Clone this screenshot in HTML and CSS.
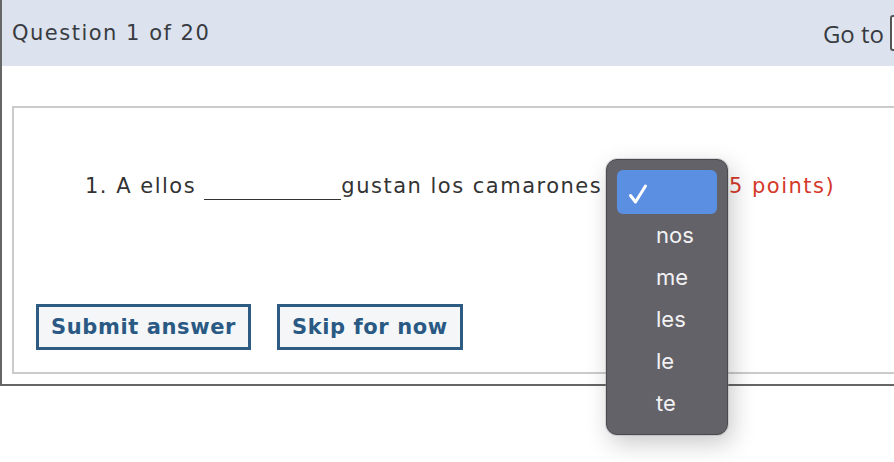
FILE: index.html
```html
<!DOCTYPE html>
<html lang="es">
<head>
<meta charset="utf-8">
<title>Question 1 of 20</title>
<link rel="stylesheet" href="styles.css">
</head>
<body>
<div class="frame">
  <header class="topbar">
    <span class="qcount">Question 1 of 20</span>
    <span class="goto">Go to <span class="goto-input"></span></span>
  </header>
  <div class="content">
    <div class="qbox">
      <p class="question">1. A ellos <span class="blank"></span>gustan los camarones<span class="select-slot"></span><span class="points">(0.5 points)</span></p>
      <div class="actions">
        <button class="btn">Submit answer</button>
        <button class="btn">Skip for now</button>
      </div>
    </div>
  </div>
  <div class="menu">
    <div class="item selected"><svg class="check" width="20" height="22" viewBox="0 0 20 22"><polyline points="2.5,12.5 7.5,19 17.5,3" fill="none" stroke="#fff" stroke-width="3" stroke-linecap="round" stroke-linejoin="round"/></svg></div>
    <div class="item">nos</div>
    <div class="item">me</div>
    <div class="item">les</div>
    <div class="item">le</div>
    <div class="item">te</div>
  </div>
</div>
</body>
</html>
```
FILE: styles.css
```css
html, body {
  margin: 0;
  padding: 0;
  background: #fff;
  overflow: hidden;
}
body {
  width: 894px;
  height: 462px;
}
.frame {
  position: relative;
  width: 960px;
  border-left: 2px solid #666;
  border-bottom: 2px solid #666;
  font-family: "DejaVu Sans", Verdana, sans-serif;
}
.topbar {
  height: 66px;
  background: #dce3ee;
  display: flex;
  align-items: center;
  justify-content: space-between;
  padding: 0 30px 0 10px;
  color: #383b41;
  font-size: 21px;
  letter-spacing: 1.5px;
}
.goto {
  display: flex;
  align-items: center;
  font-family: "Open Sans", "Noto Sans", sans-serif;
  font-size: 24px;
  letter-spacing: 0;
  color: #383b41;
}
.goto-input {
  display: inline-block;
  width: 38px;
  height: 32px;
  margin-left: 6px;
  border: 2px solid #555;
  border-radius: 3px;
  background: #fff;
}
.content {
  padding: 40px 0 10px 10px;
}
.qbox {
  border: 2px solid #cbcbcb;
  border-right: none;
  padding: 66px 0 22px 22px;
}
.question {
  margin: 0 0 0 49px;
  font-size: 21px;
  letter-spacing: 1.5px;
  line-height: 24px;
  color: #333;
  display: flex;
  align-items: baseline;
  white-space: pre;
}
.blank {
  display: inline-block;
  width: 137px;
  border-bottom: 1.5px solid #333;
  height: 1px;
  align-self: flex-end;
  margin-bottom: -2px;
}
.select-slot {
  display: inline-block;
  width: 94px;
}
.points {
  color: #d4392a;
}
.actions {
  margin-top: 106px;
  display: flex;
  gap: 26px;
}
.btn {
  font-family: "DejaVu Sans", Verdana, sans-serif;
  font-weight: bold;
  font-size: 21px;
  letter-spacing: 0.6px;
  color: #2a5a84;
  background: #f4f6f8;
  border: 3px solid #2d5b82;
  height: 46px;
  padding: 0 12px;
  margin: 0;
}
.menu {
  position: absolute;
  left: 604px;
  top: 159px;
  width: 100px;
  padding: 10px 10px;
  background: #646269;
  border: 1px solid #4a494e;
  border-radius: 11px;
  box-shadow: 0 0 0 1px rgba(160,160,165,0.35), 4px 8px 24px rgba(0,0,0,0.22);
  font-family: "Inter", "Liberation Sans", sans-serif;
  font-size: 22px;
  color: #f2f2f4;
}
.item {
  height: 42px;
  display: flex;
  align-items: center;
  padding-left: 39px;
}
.item.selected {
  height: 44px;
  background: #5b8fe2;
  border-radius: 6px;
  padding-left: 11px;
}
.check {
  margin-top: 4px;
}
```
